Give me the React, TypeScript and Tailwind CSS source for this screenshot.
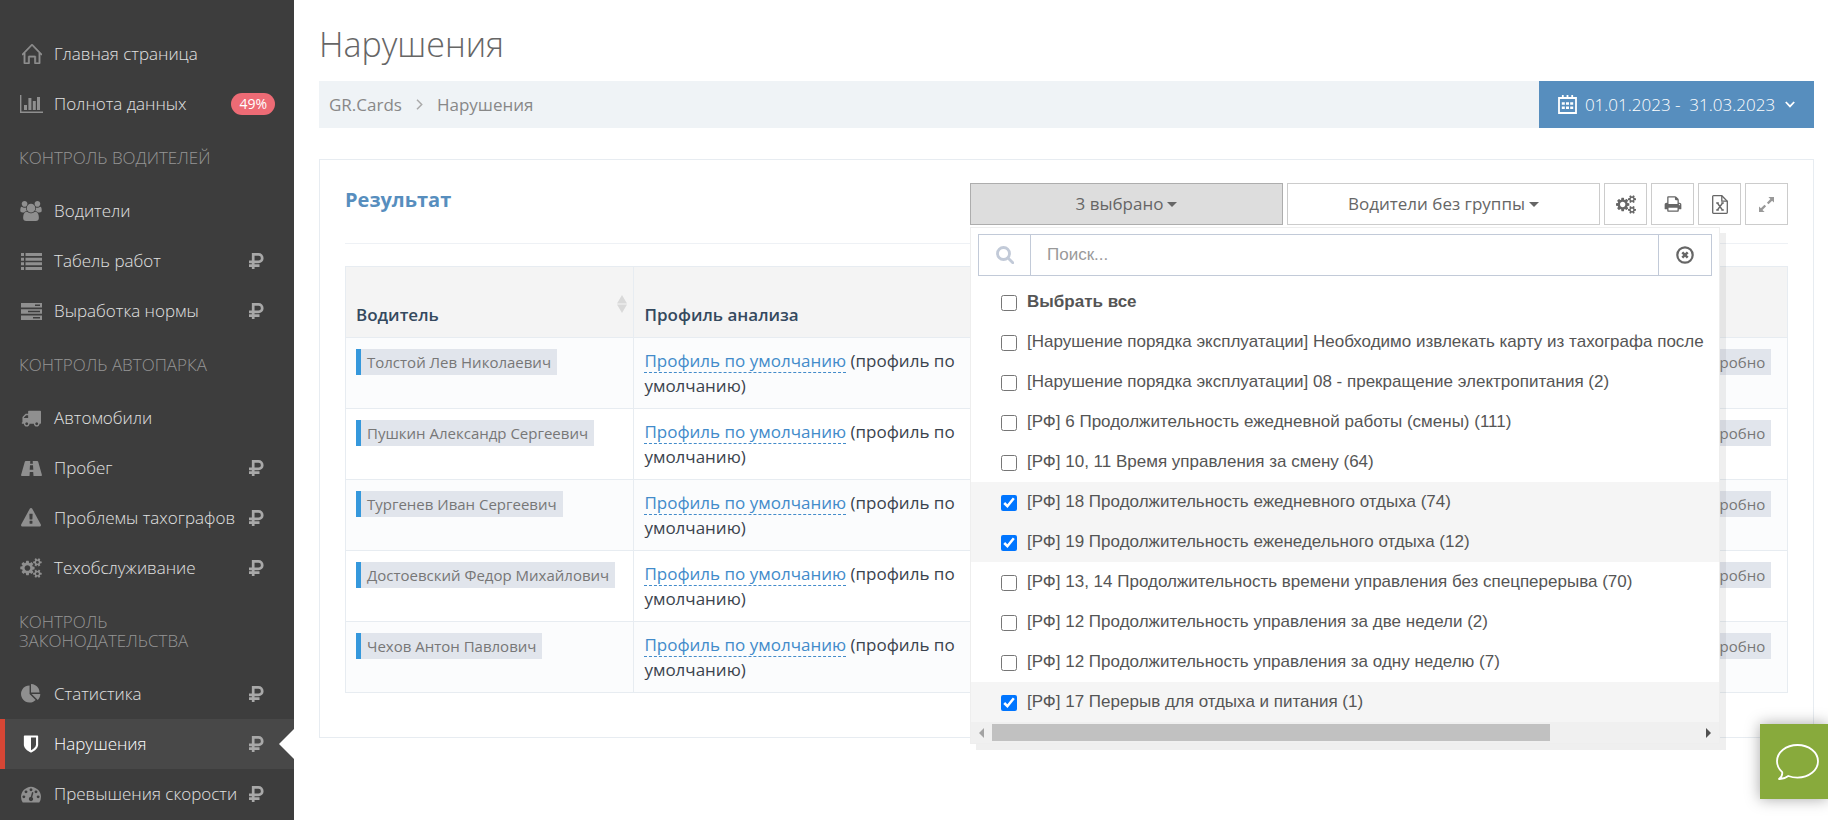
import { useState } from 'react'
import type { ReactNode } from 'react'
import { SlHome } from 'react-icons/sl'

type IconProps = { className?: string }

const COGS =
  'M896 896q0-106-75-181t-181-75-181 75-75 181 75 181 181 75 181-75 75-181zm768 512q0-52-38-90t-90-38-90 38-38 90q0 53 37.5 90.5t90.5 37.5 90.5-37.5 37.5-90.5zm0-1024q0-52-38-90t-90-38-90 38-38 90q0 53 37.5 90.5t90.5 37.5 90.5-37.5 37.5-90.5zm-384 421v185q0 10-7 19.5t-16 10.5l-155 24q-11 35-32 76 34 48 90 115 7 11 7 20 0 12-7 19-23 30-82.5 89.5t-78.5 59.5q-11 0-21-7l-115-90q-37 19-77 31-11 108-23 155-7 24-30 24h-186q-11 0-20-7.5t-10-17.5l-23-153q-34-10-75-31l-118 89q-7 7-20 7-11 0-21-8-144-133-144-160 0-9 7-19 10-14 41-53t47-61q-23-44-35-82l-152-24q-10-1-17-9.5t-7-19.5v-185q0-10 7-19.5t16-10.5l155-24q11-35 32-76-34-48-90-115-7-11-7-20 0-12 7-20 22-30 82-89t79-59q11 0 21 7l115 90q34-18 77-32 11-108 23-154 7-24 30-24h186q11 0 20 7.5t10 17.5l23 153q34 10 75 31l118-89q8-7 20-7 11 0 21 8 144 133 144 160 0 8-7 19-12 16-42 54t-45 60q23 48 34 82l152 23q10 2 17 10.5t7 19.5zm640 533v140q0 16-149 31-12 27-30 52 51 113 51 138 0 4-4 7-122 71-124 71-8 0-46-47t-52-68q-20 2-30 2t-30-2q-14 21-52 68t-46 47q-2 0-124-71-4-3-4-7 0-25 51-138-18-25-30-52-149-15-149-31v-140q0-16 149-31 13-29 30-52-51-113-51-138 0-4 4-7 4-2 35-20t59-34 30-16q8 0 46 46.5t52 67.5q20-2 30-2t30 2q51-71 92-112l6-2q4 0 124 70 4 3 4 7 0 25-51 138 17 23 30 52 149 15 149 31zm0-1024v140q0 16-149 31-12 27-30 52 51 113 51 138 0 4-4 7-122 71-124 71-8 0-46-47t-52-68q-20 2-30 2t-30-2q-14 21-52 68t-46 47q-2 0-124-71-4-3-4-7 0-25 51-138-18-25-30-52-149-15-149-31v-140q0-16 149-31 13-29 30-52-51-113-51-138 0-4 4-7 4-2 35-20t59-34 30-16q8 0 46 46.5t52 67.5q20-2 30-2t30 2q51-71 92-112l6-2q4 0 124 70 4 3 4 7 0 25-51 138 17 23 30 52 149 15 149 31z'
const TRUCK =
  'M640 1408q0-52-38-90t-90-38-90 38-38 90 38 90 90 38 90-38 38-90zm-384-512h384v-256h-158q-13 0-22 9l-195 195q-9 9-9 22v30zm1280 512q0-52-38-90t-90-38-90 38-38 90 38 90 90 38 90-38 38-90zm256-1088v1024q0 15-4 26.5t-13.5 18.5-16.5 11.5-23.5 6-22.5 2-25.5 0-22.5-.5q0 106-75 181t-181 75-181-75-75-181h-384q0 106-75 181t-181 75-181-75-75-181h-64q-3 0-22.5.5t-25.5 0-22.5-2-23.5-6-16.5-11.5-13.5-18.5-4-26.5q0-26 19-45t45-19v-320q0-8-.5-35t0-38 2.5-34.5 6.5-37 14-30.5 22.5-30l198-198q19-19 50.5-32t58.5-13h160v-192q0-26 19-45t45-19h1024q26 0 45 19t19 45z'
const WARNING =
  'M1024 1375v-190q0-14-9.5-23.5t-22.5-9.5h-192q-13 0-22.5 9.5t-9.5 23.5v190q0 14 9.5 23.5t22.5 9.5h192q13 0 22.5-9.5t9.5-23.5zm-2-374l18-459q0-12-10-19-13-11-24-11h-220q-11 0-24 11-10 7-10 21l17 457q0 10 10 16.5t24 6.5h185q14 0 23.5-6.5t10.5-16.5zm-14-934l768 1408q35 63-2 126-17 29-46.5 46t-63.5 17h-1536q-34 0-63.5-17t-46.5-46q-37-63-2-126l768-1408q17-31 47-49t65-18 65 18 47 49z'
const PIE =
  'M768 890l546 546q-106 108-247.5 168t-298.5 60q-209 0-385.5-103t-279.5-279.5-103-385.5 103-385.5 279.5-279.5 385.5-103v762zm187 6h773q0 157-60 298.5t-168 247.5zm709-128h-768v-768q209 0 385.5 103t279.5 279.5 103 385.5z'
const SHIELD =
  'M1344 960v-640h-448v1137q119-63 213-137 235-184 235-360zm192-768v768q0 86-33.5 170.5t-83 150-118 127.5-126.5 103-121 77.5-89.5 49.5-42.5 20q-12 6-26 6t-26-6q-16-7-42.5-20t-89.5-49.5-121-77.5-126.5-103-118-127.5-83-150-33.5-170.5v-768q0-26 19-45t45-19h1152q26 0 45 19t19 45z'
const GAUGE =
  'M384 1152q0-53-37.5-90.5t-90.5-37.5-90.5 37.5-37.5 90.5 37.5 90.5 90.5 37.5 90.5-37.5 37.5-90.5zm192-448q0-53-37.5-90.5t-90.5-37.5-90.5 37.5-37.5 90.5 37.5 90.5 90.5 37.5 90.5-37.5 37.5-90.5zm428 481l101-382q6-26-7.5-48.5t-38.5-29.5-48 6.5-30 39.5l-101 382q-60 5-107 43.5t-63 98.5q-20 77 20 146t117 89 146-20 89-117q16-60-6-117t-72-91zm660-33q0-53-37.5-90.5t-90.5-37.5-90.5 37.5-37.5 90.5 37.5 90.5 90.5 37.5 90.5-37.5 37.5-90.5zm-640-640q0-53-37.5-90.5t-90.5-37.5-90.5 37.5-37.5 90.5 37.5 90.5 90.5 37.5 90.5-37.5 37.5-90.5zm448 192q0-53-37.5-90.5t-90.5-37.5-90.5 37.5-37.5 90.5 37.5 90.5 90.5 37.5 90.5-37.5 37.5-90.5zm320 448q0 261-141 483-19 29-54 29h-1402q-35 0-54-29-141-221-141-483 0-182 71-348t191-286 286-191 348-71 348 71 286 191 191 286 71 348z'
const USERS =
  'M529 896q-162 5-265 128h-134q-82 0-138-40.5t-56-118.5q0-353 124-353 6 0 43.5 21t97.5 42.5 119 21.5q67 0 133-23-5 37-5 66 0 139 81 256zm1071 637q0 120-73 189.5t-194 69.5h-874q-121 0-194-69.5t-73-189.5q0-53 3.5-103.5t14-109 26.5-108.5 43-97.5 62-81 85.5-53.5 111.5-20q10 0 43 21.5t73 48 107 48 135 21.5 135-21.5 107-48 73-48 43-21.5q61 0 111.5 20t85.5 53.5 62 81 43 97.5 26.5 108.5 14 109 3.5 103.5zm-1024-1277q0 106-75 181t-181 75-181-75-75-181 75-181 181-75 181 75 75 181zm704 384q0 159-112.5 271.5t-271.5 112.5-271.5-112.5-112.5-271.5 112.5-271.5 271.5-112.5 271.5 112.5 112.5 271.5zm576 225q0 78-56 118.5t-138 40.5h-134q-103-123-265-128 81-117 81-256 0-29-5-66 66 23 133 23 59 0 119-21.5t97.5-42.5 43.5-21q124 0 124 353zm-128-609q0 106-75 181t-181 75-181-75-75-181 75-181 181-75 181 75 75 181z'
const PRINT =
  'M448 1536h896v-256h-896v256zm0-640h896v-384h-160q-40 0-68-28t-28-68v-160h-640v640zm1152 64q0-26-19-45t-45-19-45 19-19 45 19 45 45 19 45-19 19-45zm128 0v416q0 13-9.5 22.5t-22.5 9.5h-224v160q0 40-28 68t-68 28h-960q-40 0-68-28t-28-68v-160h-224q-13 0-22.5-9.5t-9.5-22.5v-416q0-79 56.5-135.5t135.5-56.5h64v-544q0-40 28-68t68-28h672q40 0 88 20t76 48l152 152q28 28 48 76t20 88v256h64q79 0 135.5 56.5t56.5 135.5z'

function Glyph({ d, box = '0 0 1792 1792', className }: { d: string; box?: string; className?: string }) {
  return (
    <svg viewBox={box} className={className} fill="currentColor" aria-hidden="true">
      <path d={d} />
    </svg>
  )
}

const Cogs = ({ className }: IconProps) => <Glyph d={COGS} box="0 0 1920 1792" className={className} />

const BarChart = () => (
  <svg viewBox="0 0 23 18" className="h-[18px] w-[23px]" fill="currentColor">
    <path d="M0 0h1.4v16.4H23V18H0z" />
    <path d="M4 10h3v5H4zM8.4 3h3v12h-3zM12.8 6h3v9h-3zM17 2h3v13h-3z" />
  </svg>
)

const ListIcon = () => (
  <svg viewBox="0 0 21 17" className="h-[17px] w-[21px]" fill="currentColor">
    <path d="M0 0h3v3H0zM0 4.7h3v3H0zM0 9.3h3v3H0zM0 14h3v3H0zM4.5 0H21v3H4.5zM4.5 4.7H21v3H4.5zM4.5 9.3H21v3H4.5zM4.5 14H21v3H4.5z" />
  </svg>
)

const ServerIcon = () => (
  <svg viewBox="0 0 21 17" className="h-[17px] w-[21px]" fill="currentColor" fillRule="evenodd">
    <path d="M0 0h21v4.6H0zM14 1.5v1.6h5V1.5zM0 6.2h21v4.6H0zM7 7.7v1.6h12V7.7zM0 12.4h21V17H0zM12 13.9v1.6h7v-1.6z" />
  </svg>
)

const RoadIcon = () => (
  <svg viewBox="0 0 21 15" className="h-[15px] w-[21px]" fill="currentColor" fillRule="evenodd">
    <path d="M4.8 0h4.5l-.2 2.8h2.8L11.7 0h4.5c.5 0 .8.3 1 .7l3.6 12.7c.4 1 .1 1.6-.7 1.6h-7.6l-.3-4H8.800l-.3 4H.9c-.8 0-1.1-.6-.7-1.600L3.800.7c.2-.4.5-.7 1-.7zM9 4.200l-.3 4.6h3.6L12 4.200z" />
  </svg>
)

const Ruble = ({ className }: IconProps) => (
  <svg viewBox="0 0 15 16" className={className} fill="none" stroke="currentColor" strokeWidth="2.700">
    <path d="M4.200 16V1.400h5.300a3.700 3.700 0 0 1 0 7.500H0M0 12.600h10.500" />
  </svg>
)

const Calendar = () => (
  <svg viewBox="0 0 19 19" className="mr-2 h-[19px] w-[19px]" fill="none" stroke="currentColor">
    <path d="M1 3h17v15H1z" strokeWidth="1.800" />
    <path d="M4.800 0v4M9.500 0v4M14.200 0v4" strokeWidth="1.800" />
    <path d="M3.800 8.500h11.400M3.800 12.700h11.400" strokeWidth="2.600" strokeDasharray="3 1.200" />
  </svg>
)

const ExcelIcon = () => (
  <svg viewBox="0 0 16 19" className="h-[19px] w-4" fill="none" stroke="currentColor" strokeWidth="1.300">
    <path d="M1.500.7h8.300l5.500 5.500v11.300c0 .5-.3.800-.8.800h-13c-.5 0-.8-.3-.8-.8v-16c0-.5.3-.8.8-.8z" />
    <path d="M9.800.7v5.500h5.500M5.400 8l5 7M10.600 8l-5.200 7M4.200 8h2.600M9.300 8h2.500M4.200 15h2.600M9.300 15h2.500" />
  </svg>
)

const ExpandIcon = () => (
  <svg viewBox="0 0 15 15" className="h-[15px] w-[15px]" fill="currentColor">
    <path d="M15 0v5.600l-1.900-1.900-3.600 3.600-1.600-1.600 3.500-3.600L9.400 0zM0 15V9.400l1.900 1.900 3.600-3.600 1.600 1.600-3.600 3.600L5.600 15z" />
  </svg>
)

const ClearIcon = () => (
  <svg viewBox="0 0 18 18" className="h-[18px] w-[18px]" fill="none" stroke="currentColor">
    <circle cx="9" cy="9" r="7.700" strokeWidth="2.200" />
    <path d="M6.300 6.300l5.400 5.400M11.700 6.300l-5.400 5.400" strokeWidth="2.500" />
  </svg>
)

const SearchIcon = () => (
  <svg viewBox="0 0 18 18" className="h-[18px] w-[18px]" fill="none" stroke="currentColor" strokeWidth="2.800">
    <circle cx="7.500" cy="7.500" r="6" />
    <path d="M12 12l4.800 4.800" strokeLinecap="round" />
  </svg>
)

const Bubble = () => (
  <svg viewBox="0 0 43 36" className="h-9 w-[43px]" fill="none" stroke="currentColor" strokeWidth="1.800">
    <path
      strokeLinejoin="round"
      d="M21.500 1C10 1 1 8.300 1 17.300c0 4.200 2 8 5.200 10.900.4 2.700-.8 5-3.200 6.800 3.800.2 6.800-1 9.300-3 2.800 1 5.900 1.600 9.200 1.600C33 33.600 42 26.300 42 17.300S33 1 21.500 1z"
    />
  </svg>
)

const Caret = () => (
  <span className="border-x-[5px] border-t-[5px] border-x-transparent border-t-current" />
)

interface NavItem {
  label: string
  icon: ReactNode
  paid?: boolean
  badge?: string
  active?: boolean
}

const nav: { title?: string; items: NavItem[] }[] = [
  {
    items: [
      { label: 'Главная страница', icon: <SlHome className="ml-0.5 size-5 stroke-current stroke-[30]" /> },
      { label: 'Полнота данных', icon: <BarChart />, badge: '49%' },
    ],
  },
  {
    title: 'Контроль водителей',
    items: [
      { label: 'Водители', icon: <Glyph d={USERS} box="-64 0 1920 1792" className="h-5 w-[22px]" /> },
      { label: 'Табель работ', icon: <ListIcon />, paid: true },
      { label: 'Выработка нормы', icon: <ServerIcon />, paid: true },
    ],
  },
  {
    title: 'Контроль автопарка',
    items: [
      { label: 'Автомобили', icon: <Glyph d={TRUCK} className="size-5" /> },
      { label: 'Пробег', icon: <RoadIcon />, paid: true },
      { label: 'Проблемы тахографов', icon: <Glyph d={WARNING} className="size-5" />, paid: true },
      { label: 'Техобслуживание', icon: <Cogs className="h-5 w-[22px]" />, paid: true },
    ],
  },
  {
    title: 'Контроль законодательства',
    items: [
      { label: 'Статистика', icon: <Glyph d={PIE} className="size-5" />, paid: true },
      { label: 'Нарушения', icon: <Glyph d={SHIELD} className="size-5" />, paid: true, active: true },
      { label: 'Превышения скорости', icon: <Glyph d={GAUGE} className="size-5" />, paid: true },
    ],
  },
]

const drivers = [
  'Толстой Лев Николаевич',
  'Пушкин Александр Сергеевич',
  'Тургенев Иван Сергеевич',
  'Достоевский Федор Михайлович',
  'Чехов Антон Павлович',
]

const violations = [
  '[Нарушение порядка эксплуатации] Необходимо извлекать карту из тахографа после',
  '[Нарушение порядка эксплуатации] 08 - прекращение электропитания (2)',
  '[РФ] 6 Продолжительность ежедневной работы (смены) (111)',
  '[РФ] 10, 11 Время управления за смену (64)',
  '[РФ] 18 Продолжительность ежедневного отдыха (74)',
  '[РФ] 19 Продолжительность еженедельного отдыха (12)',
  '[РФ] 13, 14 Продолжительность времени управления без спецперерыва (70)',
  '[РФ] 12 Продолжительность управления за две недели (2)',
  '[РФ] 12 Продолжительность управления за одну неделю (7)',
  '[РФ] 17 Перерыв для отдыха и питания (1)',
]

function Sidebar() {
  return (
    <nav className="w-[294px] shrink-0 bg-[#3d3d3d] pt-[29px] font-light text-[#e2e2e2]">
      {nav.map((group, i) => (
        <div key={i}>
          {group.title && (
            <h3 className="px-[19px] py-[19px] text-[17px] leading-[19px] uppercase text-[#959595]">{group.title}</h3>
          )}
          {group.items.map(item => (
            <a
              key={item.label}
              href="#"
              className={
                item.active
                  ? 'relative flex h-[50px] items-center border-l-[5px] border-[#d64635] bg-[#484848] pr-[30px] pl-3.5 text-white'
                  : 'flex h-[50px] items-center pr-[30px] pl-[19px]'
              }
            >
              <span className={item.active ? 'flex w-6 justify-center text-white' : 'flex w-6 justify-center text-[#8f8f8f]'}>
                {item.icon}
              </span>
              <span className="ml-[11px] text-[17px] whitespace-nowrap">{item.label}</span>
              {item.badge && (
                <span className="-mr-[11px] ml-auto rounded-full bg-[#ed6b75] px-2 text-sm leading-[22px] font-normal text-white">{item.badge}</span>
              )}
              {item.paid && <Ruble className="ml-auto h-4 w-[15px] shrink-0 text-[#a8a8a8]" />}
              {item.active && (
                <span className="absolute top-2.5 right-0 border-y-[15px] border-r-[15px] border-y-transparent border-r-white" />
              )}
            </a>
          ))}
        </div>
      ))}
    </nav>
  )
}

function ViolationMenu({ picked, onToggle, onAll }: { picked: number[]; onToggle: (i: number) => void; onAll: () => void }) {
  return (
    <div className="absolute top-full left-0 z-10 mt-0.5 w-[750px] border border-[#eee] bg-white font-['Liberation_Sans',sans-serif] text-[#555] shadow-[6px_6px_rgba(102,102,102,0.1)]">
      <div className="mx-[7px] mt-1.5 flex h-[42px] border border-[#c2cad8]">
        <span className="flex w-[51px] items-center justify-center text-[#c2cad8]">
          <SearchIcon />
        </span>
        <input
          aria-label="Поиск"
          placeholder="Поиск..."
          className="min-w-0 flex-1 border-x border-[#c2cad8] px-4 text-[17px] outline-none placeholder:text-[#999]"
        />
        <button aria-label="Очистить" className="flex w-[52px] items-center justify-center text-[#666]">
          <ClearIcon />
        </button>
      </div>
      <div className="mt-1.5 overflow-hidden">
        <label className="flex h-10 items-center pl-[30px] text-[17px] font-bold">
          <input type="checkbox" className="mt-0.5 mr-2.5 size-4" checked={picked.length === violations.length} onChange={onAll} />
          Выбрать все
        </label>
        {violations.map((text, i) => (
          <label
            key={text}
            className={
              picked.includes(i)
                ? 'flex h-10 items-center bg-[#f5f5f5] pl-[30px] text-[17px] whitespace-nowrap'
                : 'flex h-10 items-center pl-[30px] text-[17px] whitespace-nowrap'
            }
          >
            <input type="checkbox" className="mt-0.5 mr-2.5 size-4 shrink-0" checked={picked.includes(i)} onChange={() => onToggle(i)} />
            {text}
          </label>
        ))}
      </div>
      <div className="flex h-[21px] items-center bg-[#f0f0f0] px-2">
        <span className="border-y-[5px] border-r-[5px] border-y-transparent border-r-[#a3a3a3]" />
        <span className="mx-2 flex-1">
          <span className="block h-[17px] w-[79%] bg-[#c1c1c1]" />
        </span>
        <span className="border-y-[5px] border-l-[5px] border-y-transparent border-l-[#505050]" />
      </div>
    </div>
  )
}

const toolButton = 'flex w-[43px] items-center justify-center border border-[#ccc] bg-white text-[#666]'

export default function App() {
  const [picked, setPicked] = useState([4, 5, 9])
  const [open, setOpen] = useState(true)

  const toggle = (i: number) => setPicked(picked.includes(i) ? picked.filter(p => p !== i) : [...picked, i])
  const toggleAll = () => setPicked(picked.length === violations.length ? [] : violations.map((_, i) => i))

  return (
    <div className="flex min-h-screen bg-white font-['Open_Sans',sans-serif] text-[17px] text-[#3a434d]">
      <Sidebar />

      <main className="min-w-0 flex-1 pr-3.5 pl-[25px]">
        <h1 className="pt-5 pb-[13px] text-[34px] leading-[48px] font-light text-[#666]">Нарушения</h1>

        <div className="flex h-[47px] items-center bg-[#eff3f6]">
          <div className="flex items-center pl-2.5 text-[#888]">
            <a href="#">GR.Cards</a>
            <svg viewBox="0 0 7 11" className="mx-3.5 h-[11px] w-[7px]" fill="none" stroke="#aaa" strokeWidth="1.500">
              <path d="M1 .8l4.700 4.700L1 10.200" />
            </svg>
            <span>Нарушения</span>
          </div>
          <button className="ml-auto flex h-full w-[275px] items-center justify-center bg-[#578ebe] text-white">
            <Calendar />
            <span className="font-light whitespace-pre">01.01.2023 -  31.03.2023</span>
            <svg viewBox="0 0 10 7" className="ml-2.5 h-[7px] w-2.5" fill="none" stroke="currentColor" strokeWidth="1.800">
              <path d="M.8 1L5 5.400 9.200 1" />
            </svg>
          </button>
        </div>

        <section className="mt-[31px] border border-[#e7ecf1] px-[25px] pt-[23px] pb-11">
          <div className="flex h-[61px] items-start border-b border-[#eef1f5]">
            <h2 className="text-[20px] leading-[34px] font-bold text-[#578ebe]">Результат</h2>
            <div className="ml-auto flex h-[42px] gap-1">
              <div className="relative flex">
                <button
                  onClick={() => setOpen(!open)}
                  className="flex w-[313px] items-center justify-center gap-1 border border-[#adadad] bg-[#ddd] text-[#666]"
                >
                  3 выбрано
                  <Caret />
                </button>
                {open && <ViolationMenu picked={picked} onToggle={toggle} onAll={toggleAll} />}
              </div>
              <button className="flex w-[313px] items-center justify-center gap-1 border border-[#ccc] bg-white text-[#666]">
                Водители без группы
                <Caret />
              </button>
              <button aria-label="Настройки" className={toolButton}>
                <Cogs className="h-[19px] w-5" />
              </button>
              <button aria-label="Печать" className={toolButton}>
                <Glyph d={PRINT} className="size-[18px]" />
              </button>
              <button aria-label="Экспорт" className={toolButton}>
                <ExcelIcon />
              </button>
              <button aria-label="На весь экран" className="flex w-[43px] items-center justify-center border border-[#ccc] bg-white text-[#999]">
                <ExpandIcon />
              </button>
            </div>
          </div>

          <table className="mt-[22px] w-full table-fixed border-collapse border border-[#e7ecf1]">
            <thead>
              <tr className="h-[71px] bg-[#f4f4f4] text-left align-bottom text-[#34495e]">
                <th className="w-[20%] border border-[#e7ecf1] px-2.5 pb-2.5 font-semibold">
                  <span className="flex items-end justify-between">
                    Водитель
                    <svg viewBox="0 0 10 18" className="-mr-1 mb-3.5 h-[18px] w-2.5" fill="#d9d9d9">
                      <path d="M5 0l5 8.500H0zM5 18l5-8.500H0z" />
                    </svg>
                  </span>
                </th>
                <th className="w-[24%] border border-[#e7ecf1] px-2.5 pb-2.5 font-semibold">Профиль анализа</th>
                <th className="border border-[#e7ecf1]" />
                <th className="w-[118px] border border-[#e7ecf1]" />
              </tr>
            </thead>
            <tbody>
              {drivers.map(name => (
                <tr key={name} className="h-[71px] border-b border-[#e7ecf1] align-top odd:bg-[#fbfcfd]">
                  <td className="border-x border-[#e7ecf1] px-2.5 pt-[11px]">
                    <span className="inline-block border-l-[5px] border-[#3598dc] bg-[#e1e5ec] px-1.5 text-[15px] leading-[26px] whitespace-nowrap text-[#777]">
                      {name}
                    </span>
                  </td>
                  <td className="border-x border-[#e7ecf1] px-2.5 pt-2.5 leading-[25px]">
                    <a href="#" className="border-b border-dashed border-[#428bca] text-[#428bca]">
                      Профиль по умолчанию
                    </a>{' '}
                    (профиль по умолчанию)
                  </td>
                  <td className="border-x border-[#e7ecf1]" />
                  <td className="border-x border-[#e7ecf1] px-2.5 pt-[11px]">
                    <span className="inline-block border-l-[5px] border-[#3598dc] bg-[#e1e5ec] px-1.5 text-[15px] leading-[26px] text-[#777]">
                      Подробно
                    </span>
                  </td>
                </tr>
              ))}
            </tbody>
          </table>
        </section>
      </main>

      <button
        aria-label="Чат"
        className="fixed right-0 bottom-[21px] z-20 flex h-[75px] w-[68px] items-center justify-center bg-[#88aa3c] pl-1.5 text-white shadow-[0_0_14px_rgba(0,0,0,0.35)]"
      >
        <Bubble />
      </button>
    </div>
  )
}
